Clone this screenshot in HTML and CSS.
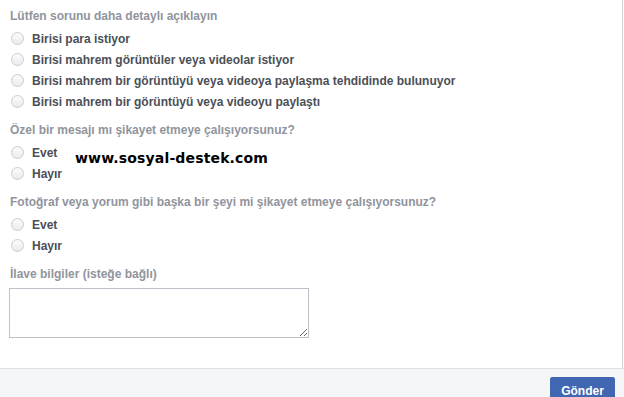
FILE: index.html
```html
<!DOCTYPE html>
<html lang="tr">
<head>
<meta charset="utf-8">
<link rel="stylesheet" href="styles.css">
</head>
<body>
<div class="dialog">
  <div class="content">
    <div class="q first">Lütfen sorunu daha detaylı açıklayın</div>
    <ul class="opts">
      <li><span class="radio"></span>Birisi para istiyor</li>
      <li><span class="radio"></span>Birisi mahrem görüntüler veya videolar istiyor</li>
      <li><span class="radio"></span>Birisi mahrem bir görüntüyü veya videoya paylaşma tehdidinde bulunuyor</li>
      <li><span class="radio"></span>Birisi mahrem bir görüntüyü veya videoyu paylaştı</li>
    </ul>
    <div class="q">Özel bir mesajı mı şikayet etmeye çalışıyorsunuz?</div>
    <ul class="opts">
      <li><span class="radio"></span>Evet</li>
      <li><span class="radio"></span>Hayır</li>
    </ul>
    <div class="q">Fotoğraf veya yorum gibi başka bir şeyi mi şikayet etmeye çalışıyorsunuz?</div>
    <ul class="opts">
      <li><span class="radio"></span>Evet</li>
      <li><span class="radio"></span>Hayır</li>
    </ul>
    <div class="q">İlave bilgiler (isteğe bağlı)</div>
    <textarea class="info"></textarea>
  </div>
  <div class="footer">
    <button class="send">Gönder</button>
  </div>
  <div class="watermark">www.sosyal-destek.com</div>
</div>
</body>
</html>
```
FILE: styles.css
```css
html, body {
  margin: 0;
  padding: 0;
  background: #fff;
}
.dialog {
  position: relative;
  width: 624px;
  height: 397px;
  overflow: hidden;
  font-family: "Liberation Sans", Arial, sans-serif;
  font-size: 12px;
  font-weight: bold;
}
.content {
  width: 612px;
  padding: 8px 0 0 10px;
  height: 360px;
  border-right: 1px solid #d3d3d3;
  box-sizing: content-box;
}
.q {
  color: #90949c;
  line-height: 16px;
  margin-top: 10px;
}
.q.first {
  margin-top: 0;
}
.opts {
  list-style: none;
  margin: 4px 0 0 0;
  padding: 0;
}
.opts li {
  display: flex;
  align-items: center;
  height: 21px;
  color: #4b4f56;
}
.radio {
  width: 13px;
  height: 13px;
  box-sizing: border-box;
  border: 1px solid #c9ccd1;
  border-radius: 50%;
  background: linear-gradient(#fbfbfc, #e9ebee);
  margin: 0 8px 0 1px;
  flex: none;
}
.info {
  display: block;
  margin: 6px 0 0 -1px;
  width: 300px;
  height: 50px;
  box-sizing: border-box;
  border: 1px solid #bdc1c9;
  border-radius: 0;
  resize: vertical;
  padding: 3px;
}
.footer {
  border-top: 1px solid #dddfe2;
  background: #f5f6f7;
  height: 40px;
  display: flex;
  justify-content: flex-end;
  align-items: flex-start;
  padding: 8px 9px 0 0;
}
.send {
  width: 65px;
  height: 27px;
  background: #4267b2;
  border: 1px solid #4267b2;
  border-radius: 2px;
  color: #fff;
  font-family: "Liberation Sans", Arial, sans-serif;
  font-size: 12px;
  font-weight: bold;
  padding: 0;
}
.watermark {
  position: absolute;
  left: 75px;
  top: 148px;
  font-family: "DejaVu Sans", Verdana, sans-serif;
  font-size: 14px;
  font-weight: bold;
  letter-spacing: 0.15px;
  color: #000;
  line-height: 20px;
}
```
